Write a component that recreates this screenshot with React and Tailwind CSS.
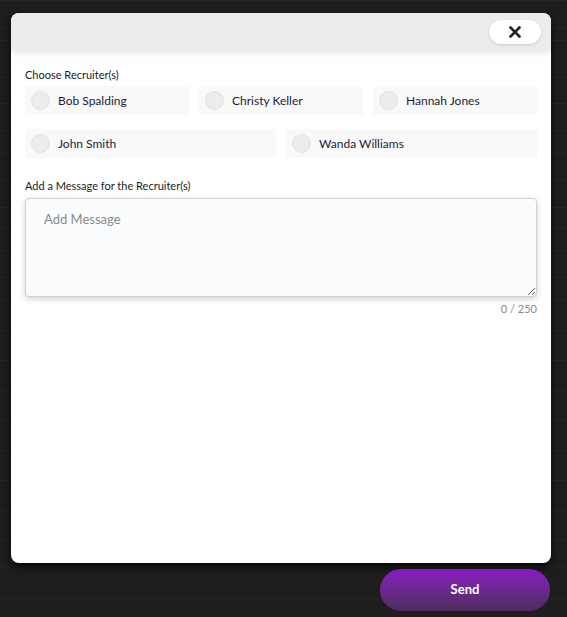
import React, { useState } from 'react';

const recruiters = [
  ['Bob Spalding', 'Christy Keller', 'Hannah Jones'],
  ['John Smith', 'Wanda Williams'],
];

// faint table rows behind the modal
const bgRows = [0, 27, 40, 77, 103, 130, 153, 180, 207, 227, 250, 277, 300, 330, 360, 390, 420, 450, 480, 510, 540, 566, 598];

const RecruiterOption = ({ name, checked, onToggle }) => (
  <button
    type="button"
    onClick={onToggle}
    className="flex-1 flex items-center h-[29px] bg-[#f9f9f9] pl-[6px] text-left"
  >
    <span
      className={`w-[19px] h-[19px] rounded-full border border-[#e2e2e2] ${
        checked ? 'bg-[#8a17c4]' : 'bg-[#ececec]'
      }`}
    />
    <span className="ml-[8px] text-[12px] text-[#1b1b3a]">{name}</span>
  </button>
);

const App = () => {
  const [selected, setSelected] = useState({});
  const [message, setMessage] = useState('');

  const toggle = (name) => setSelected((prev) => ({ ...prev, [name]: !prev[name] }));

  return (
    <div
      className="relative w-[567px] h-[617px] bg-[#1e1e1e] overflow-hidden"
      style={{ fontFamily: 'Lato, "Noto Sans", sans-serif' }}
    >
      {/* background list rows */}
      {bgRows.map((y) => (
        <div key={y} className="absolute left-0 right-0 h-px bg-[#262626]" style={{ top: y }} />
      ))}

      <div className="relative pt-[13px] pl-[11px]">
        {/* Modal */}
        <div className="w-[540px] h-[550px] bg-white rounded-[8px] shadow-[0_4px_10px_rgba(0,0,0,0.8)] overflow-hidden">
          <div className="h-[37px] bg-[#ececec] flex items-center justify-end pr-[10px] shadow-[0_3px_6px_rgba(0,0,0,0.1)] relative">
            <button
              type="button"
              className="w-[52px] h-[24px] rounded-full bg-white shadow-[0_1px_3px_rgba(0,0,0,0.15)] flex items-center justify-center"
            >
              <svg width="12" height="12" viewBox="0 0 12 12">
                <path d="M1.5 1.5 L10.5 10.5 M10.5 1.5 L1.5 10.5" stroke="#222" strokeWidth="2.6" strokeLinecap="round" />
              </svg>
            </button>
          </div>

          <div className="px-[14px] pt-[18px]">
            <p className="text-[11px] text-[#1b1b1b] leading-[14px]">Choose Recruiter(s)</p>

            <div className="mt-[4px] flex flex-col gap-[14px]">
              {recruiters.map((row, i) => (
                <div key={i} className="flex gap-[10px]">
                  {row.map((name) => (
                    <RecruiterOption
                      key={name}
                      name={name}
                      checked={!!selected[name]}
                      onToggle={() => toggle(name)}
                    />
                  ))}
                </div>
              ))}
            </div>

            <p className="mt-[21px] text-[11px] text-[#1b1b1b] leading-[14px]">
              Add a Message for the Recruiter(s)
            </p>

            <textarea
              value={message}
              maxLength={250}
              onChange={(e) => setMessage(e.target.value)}
              placeholder="Add Message"
              className="mt-[5px] block w-full h-[99px] bg-[#fbfcfe] border border-[#cfcfcf] rounded-[4px] shadow-[0_2px_6px_rgba(0,0,0,0.18)] px-[18px] py-[11px] text-[13px] text-[#333] placeholder:text-[#8a8a8a] outline-none"
            />
            <p className="mt-[4px] text-right text-[11px] text-[#8a8a8a]">{message.length} / 250</p>
          </div>
        </div>
      </div>

      <div className="relative flex justify-end pr-[17px] mt-[6px]">
        <button
          type="button"
          className="w-[170px] h-[42px] rounded-full bg-gradient-to-b from-[#8a17c4] to-[#4d2b5d] text-white text-[13px] font-bold"
        >
          Send
        </button>
      </div>
    </div>
  );
};

export default App;
